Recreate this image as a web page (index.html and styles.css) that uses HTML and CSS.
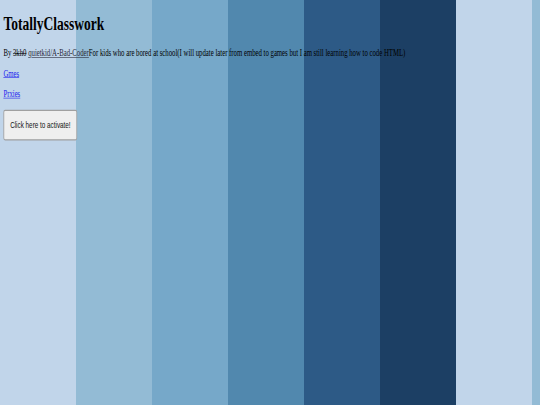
FILE: index.html
```html
<!DOCTYPE html>
<html lang="en">
<head>
<meta charset="utf-8">
<title>TotallyClasswork</title>
<link rel="stylesheet" href="styles.css">
</head>
<body>
<div class="frame">
  <div class="page">
    <h1 class="title">TotallyClasswork</h1>
    <p class="byline">By <s class="old">3kh0</s> <a class="author" href="#">quietkid/A-Bad-Coder</a>For kids who are bored at school(I will update later from embed to games but I am still learning how to code HTML)</p>
    <p class="nav-item"><a class="nav-link" href="#">Gmes</a></p>
    <p class="nav-item"><a class="nav-link" href="#">Prxies</a></p>
    <button class="activate">Click here to activate!</button>
  </div>
</div>
</body>
</html>
```

FILE: styles.css
```css
html, body {
  margin: 0;
  padding: 0;
  overflow: hidden;
  background: #c1d5ea;
}

.frame {
  width: 540px;
  height: 405px;
  overflow: hidden;
}

.page {
  display: flow-root;
  width: 1280px;
  height: 675px;
  box-sizing: border-box;
  padding: 0 8px;
  transform: scale(0.421875, 0.6);
  transform-origin: 0 0;
  font-family: "Liberation Serif", "Times New Roman", serif;
  font-size: 16px;
  color: #000;
  background: repeating-linear-gradient(to right,
    #c1d5ea 0 180px,
    #93bbd5 180px 360px,
    #76a8c9 360px 540px,
    #5188ae 540px 720px,
    #2d5a86 720px 900px,
    #1c3f64 900px 1080px);
}

.title {
  font-size: 32px;
  font-weight: bold;
  margin: 21.44px 0;
}

.byline {
  margin: 16px 0;
}

.old {
  text-decoration: line-through;
}

.author {
  color: #2a2a3a;
}

.nav-item {
  margin: 16px 0;
}

.nav-link {
  color: #2020ee;
}

.activate {
  font-family: "Liberation Sans", Arial, sans-serif;
  font-size: 15px;
  color: #111;
  background: #efefef;
  border: 2px solid #a0a0a0;
  border-radius: 4px;
  padding: 15px 14px;
  margin-top: 1px;
}
```
